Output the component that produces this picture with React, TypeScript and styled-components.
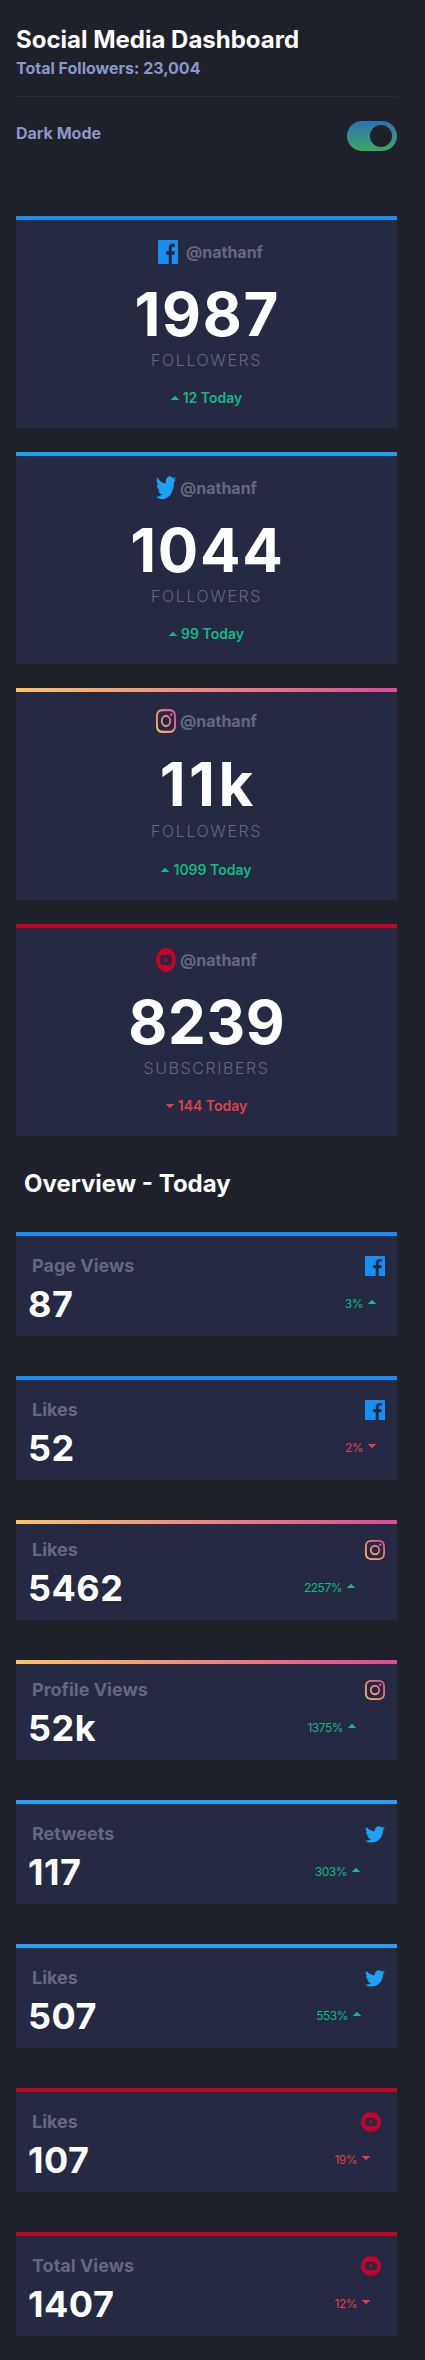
import React, { useId } from "react";
import styled, { createGlobalStyle } from "styled-components";

const GlobalStyle = createGlobalStyle`
  *, *::before, *::after { box-sizing: border-box; }
  body {
    margin: 0;
    background: #1f212a;
    font-family: Inter, "Liberation Sans", sans-serif;
    color: #fff;
  }
  h1, h2, p { margin: 0; }
`;

type Network = "facebook" | "twitter" | "instagram" | "youtube";

const accents: Record<Network, string> = {
  facebook: "#178ff5",
  twitter: "#1da1f2",
  instagram: "linear-gradient(to right, #fdc468, #df4996)",
  youtube: "#c4032a",
};

const paths: Record<Network, string> = {
  facebook:
    "M18.896 0H1.104C.494 0 0 .494 0 1.104v17.793C0 19.506.494 20 1.104 20h9.58v-7.745H8.076V9.237h2.606V7.01c0-2.583 1.578-3.99 3.883-3.99 1.104 0 2.052.082 2.329.119v2.7h-1.598c-1.254 0-1.496.597-1.496 1.47v1.928h2.989l-.39 3.018h-2.6V20h5.098c.608 0 1.102-.494 1.102-1.104V1.104C20 .494 19.506 0 18.896 0z",
  twitter:
    "M20 2.172a8.192 8.192 0 01-2.357.646 4.11 4.11 0 001.804-2.27 8.22 8.22 0 01-2.605.996A4.096 4.096 0 0013.847.248c-2.65 0-4.596 2.472-3.998 5.037A11.648 11.648 0 011.392 1 4.109 4.109 0 002.662 6.478 4.086 4.086 0 01.8 5.964c-.045 1.901 1.318 3.68 3.291 4.075a4.113 4.113 0 01-1.853.07 4.106 4.106 0 003.833 2.849A8.25 8.25 0 010 14.658a11.616 11.616 0 006.29 1.843c7.618 0 11.922-6.434 11.662-12.205A8.354 8.354 0 0020 2.172z",
  instagram:
    "M10 1.802c2.67 0 2.987.01 4.042.059 2.71.123 3.975 1.409 4.099 4.099.048 1.054.057 1.37.057 4.04 0 2.672-.01 2.988-.057 4.042-.124 2.687-1.387 3.975-4.1 4.099-1.054.048-1.37.058-4.041.058-2.67 0-2.987-.01-4.04-.058-2.718-.124-3.977-1.416-4.1-4.1-.048-1.054-.058-1.37-.058-4.041 0-2.67.01-2.986.058-4.04.124-2.69 1.387-3.977 4.1-4.1 1.054-.048 1.37-.058 4.04-.058zM10 0C7.284 0 6.944.012 5.877.06 2.246.227.227 2.242.061 5.877.01 6.944 0 7.284 0 10s.012 3.057.06 4.123c.167 3.632 2.182 5.65 5.817 5.817 1.067.048 1.407.06 4.123.06s3.057-.012 4.123-.06c3.629-.167 5.652-2.182 5.816-5.817.05-1.066.061-1.407.061-4.123s-.012-3.056-.06-4.122C19.777 2.249 17.76.228 14.124.06 13.057.01 12.716 0 10 0zm0 4.865a5.135 5.135 0 100 10.27 5.135 5.135 0 000-10.27zm0 8.468a3.333 3.333 0 110-6.666 3.333 3.333 0 010 6.666zm5.338-9.87a1.2 1.2 0 100 2.4 1.2 1.2 0 000-2.4z",
  youtube:
    "M10 0C4.478 0 0 4.478 0 10s4.478 10 10 10 10-4.478 10-10S15.522 0 10 0zm3.701 14.077c-1.752.12-5.653.12-7.402 0C4.402 13.947 4.182 13.018 4.167 10c.014-3.024.237-3.947 2.132-4.077 1.749-.12 5.65-.12 7.402 0 1.898.13 2.117 1.059 2.133 4.077-.015 3.024-.238 3.947-2.133 4.077zM8.333 8.048l4.098 1.949-4.098 1.955V8.048z",
};

const Icon = styled.svg`
  display: block;
  flex: none;
`;

function NetworkIcon({ network, height }: { network: Network; height: number }) {
  const id = useId().replace(/[^a-zA-Z0-9]/g, "");
  const gradient = network === "instagram";
  return (
    <Icon
      width={20}
      height={height}
      viewBox={network === "twitter" ? "0 0 20 17" : "0 0 20 20"}
      preserveAspectRatio="none"
    >
      {gradient && (
        <defs>
          <linearGradient id={id} x1="0" y1="1" x2="1" y2="0">
            <stop offset="0" stopColor="#fdc468" />
            <stop offset="1" stopColor="#df4996" />
          </linearGradient>
        </defs>
      )}
      <path d={paths[network]} fill={gradient ? `url(#${id})` : accents[network]} />
    </Icon>
  );
}

function Arrow({ down }: { down?: boolean }) {
  const color = down ? "#dc414c" : "#1db489";
  return (
    <Icon width={8} height={4} viewBox="0 0 8 4">
      <path
        d={down ? "M0 0l4 4 4-4z" : "M0 4l4-4 4 4z"}
        fill={color}
        stroke={color}
        strokeWidth={0.5}
      />
    </Icon>
  );
}

const Page = styled.main`
  width: 425px;
  height: 2360px;
  padding: 24px 28px 24px 16px;
`;

const Header = styled.header`
  height: 73px;
  border-bottom: 1px solid #252a45;
`;

const Title = styled.h1`
  font-size: 24px;
  line-height: 32px;
  font-weight: 700;
`;

const Total = styled.p`
  font-size: 16px;
  line-height: 24px;
  font-weight: 700;
  color: #8b97c6;
`;

const ModeRow = styled.div`
  display: flex;
  justify-content: space-between;
  height: 119px;
  padding-top: 24px;
`;

const ModeLabel = styled.span`
  font-size: 16px;
  line-height: 24px;
  font-weight: 700;
  color: #8b97c6;
`;

const Toggle = styled.button`
  display: flex;
  justify-content: flex-end;
  width: 50px;
  height: 30px;
  padding: 4px 5px;
  border: 0;
  border-radius: 15px;
  background: linear-gradient(to bottom, #2f6fb5, #3da862);
`;

const Knob = styled.span`
  width: 22px;
  height: 22px;
  border-radius: 50%;
  background: #1f212a;
`;

const Stack = styled.section<{ $gap: number }>`
  display: flex;
  flex-direction: column;
  gap: ${(p) => p.$gap}px;
`;

const Card = styled.article<{ $network: Network }>`
  background: #262942;

  &::before {
    content: "";
    display: block;
    height: 4px;
    background: ${(p) => accents[p.$network]};
  }
`;

const FollowerCard = styled(Card)`
  height: 212px;
  text-align: center;
`;

const Account = styled.div<{ $compact: boolean; $wide: boolean }>`
  display: flex;
  justify-content: center;
  height: ${(p) => (p.$compact ? 50 : 52)}px;
  padding-top: ${(p) => (p.$compact ? 17 : 20)}px;
  padding-left: ${(p) => (p.$wide ? 8 : 0)}px;
  gap: ${(p) => (p.$wide ? 8 : 4)}px;
`;

const Handle = styled.span`
  font-size: 16px;
  line-height: 24px;
  font-weight: 700;
  color: #63687e;
`;

const Count = styled.p<{ $tracking: number }>`
  height: 76px;
  padding-left: ${(p) => p.$tracking}px;
  font-size: 60px;
  line-height: 84px;
  font-weight: 700;
  letter-spacing: ${(p) => p.$tracking}px;
`;

const Audience = styled.p<{ $compact: boolean }>`
  height: ${(p) => (p.$compact ? 42 : 40)}px;
  padding-top: ${(p) => (p.$compact ? 1 : 0)}px;
  font-size: 16px;
  line-height: 24px;
  font-weight: 350;
  letter-spacing: 1.6px;
  color: #63687e;
`;

const Trend = styled.div<{ $down?: boolean }>`
  display: flex;
  align-items: center;
  justify-content: center;
  gap: 4px;
  color: ${(p) => (p.$down ? "#dc414c" : "#10b981")};
`;

const Today = styled(Trend)`
  height: 20px;
  font-size: 14px;
  line-height: 20px;
  font-weight: 600;
`;

const SectionTitle = styled.h2`
  height: 96px;
  padding: 32px 0 0 8px;
  font-size: 24px;
  line-height: 32px;
  font-weight: 700;
`;

const OverviewCard = styled(Card)<{ $compact: boolean }>`
  height: ${(p) => (p.$compact ? 100 : 104)}px;
`;

const OverviewBody = styled.div<{ $compact: boolean }>`
  display: flex;
  justify-content: space-between;
  padding-top: ${(p) => (p.$compact ? 12 : 16)}px;
`;

const Metric = styled.p`
  padding-left: 16px;
  font-size: 18px;
  line-height: 28px;
  font-weight: 700;
  color: #63687e;
`;

const Value = styled.p`
  padding-left: 12px;
  padding-top: 4px;
  font-size: 36px;
  line-height: 40px;
  font-weight: 700;
  letter-spacing: 0.5px;
`;

const Side = styled.div<{ $iconTop: number; $iconRight: number }>`
  display: flex;
  flex-direction: column;
  align-items: flex-end;

  > svg {
    margin: ${(p) => p.$iconTop}px ${(p) => p.$iconRight}px 0 0;
  }
`;

const Change = styled(Trend)<{ $right: number }>`
  align-items: flex-start;
  gap: 5px;
  height: 28px;
  margin-top: auto;
  padding-right: ${(p) => p.$right}px;
  font-size: 12px;
  line-height: 16px;
  letter-spacing: -0.5px;

  > svg {
    margin-top: 4px;
  }
`;

const accounts: {
  network: Network;
  count: string;
  tracking: number;
  label: string;
  today: string;
  down?: boolean;
}[] = [
  { network: "facebook", count: "1987", tracking: 1.7, label: "FOLLOWERS", today: "12 Today" },
  { network: "twitter", count: "1044", tracking: 1.7, label: "FOLLOWERS", today: "99 Today" },
  { network: "instagram", count: "11k", tracking: 3.5, label: "FOLLOWERS", today: "1099 Today" },
  { network: "youtube", count: "8239", tracking: 0.7, label: "SUBSCRIBERS", today: "144 Today", down: true },
];

const metrics: { network: Network; name: string; value: string; change: string; right: number; down?: boolean }[] = [
  { network: "facebook", name: "Page Views", value: "87", change: "3%", right: 21 },
  { network: "facebook", name: "Likes", value: "52", change: "2%", right: 21, down: true },
  { network: "instagram", name: "Likes", value: "5462", change: "2257%", right: 42 },
  { network: "instagram", name: "Profile Views", value: "52k", change: "1375%", right: 41 },
  { network: "twitter", name: "Retweets", value: "117", change: "303%", right: 37 },
  { network: "twitter", name: "Likes", value: "507", change: "553%", right: 36 },
  { network: "youtube", name: "Likes", value: "107", change: "19%", right: 27, down: true },
  { network: "youtube", name: "Total Views", value: "1407", change: "12%", right: 27, down: true },
];

export default function App() {
  return (
    <>
      <GlobalStyle />
      <Page>
        <Header>
          <Title>Social Media Dashboard</Title>
          <Total>Total Followers: 23,004</Total>
        </Header>
        <ModeRow>
          <ModeLabel>Dark Mode</ModeLabel>
          <Toggle aria-label="Dark Mode">
            <Knob />
          </Toggle>
        </ModeRow>
        <Stack $gap={24}>
          {accounts.map((a) => {
            const compact = a.network === "instagram";
            return (
              <FollowerCard key={a.network} $network={a.network}>
                <Account $compact={compact} $wide={a.network === "facebook"}>
                  <NetworkIcon network={a.network} height={24} />
                  <Handle>@nathanf</Handle>
                </Account>
                <Count $tracking={a.tracking}>{a.count}</Count>
                <Audience $compact={compact}>{a.label}</Audience>
                <Today $down={a.down}>
                  <Arrow down={a.down} />
                  {a.today}
                </Today>
              </FollowerCard>
            );
          })}
        </Stack>
        <SectionTitle>Overview - Today</SectionTitle>
        <Stack $gap={40}>
          {metrics.map((m, i) => {
            const compact = m.network === "instagram";
            return (
              <OverviewCard key={i} $network={m.network} $compact={compact}>
                <OverviewBody $compact={compact}>
                  <div>
                    <Metric>{m.name}</Metric>
                    <Value>{m.value}</Value>
                  </div>
                  <Side
                    $iconTop={m.network === "twitter" ? 6 : 4}
                    $iconRight={m.network === "youtube" ? 16 : 12}
                  >
                    <NetworkIcon network={m.network} height={m.network === "twitter" ? 17 : 20} />
                    <Change $down={m.down} $right={m.right}>
                      {m.change}
                      <Arrow down={m.down} />
                    </Change>
                  </Side>
                </OverviewBody>
              </OverviewCard>
            );
          })}
        </Stack>
      </Page>
    </>
  );
}
